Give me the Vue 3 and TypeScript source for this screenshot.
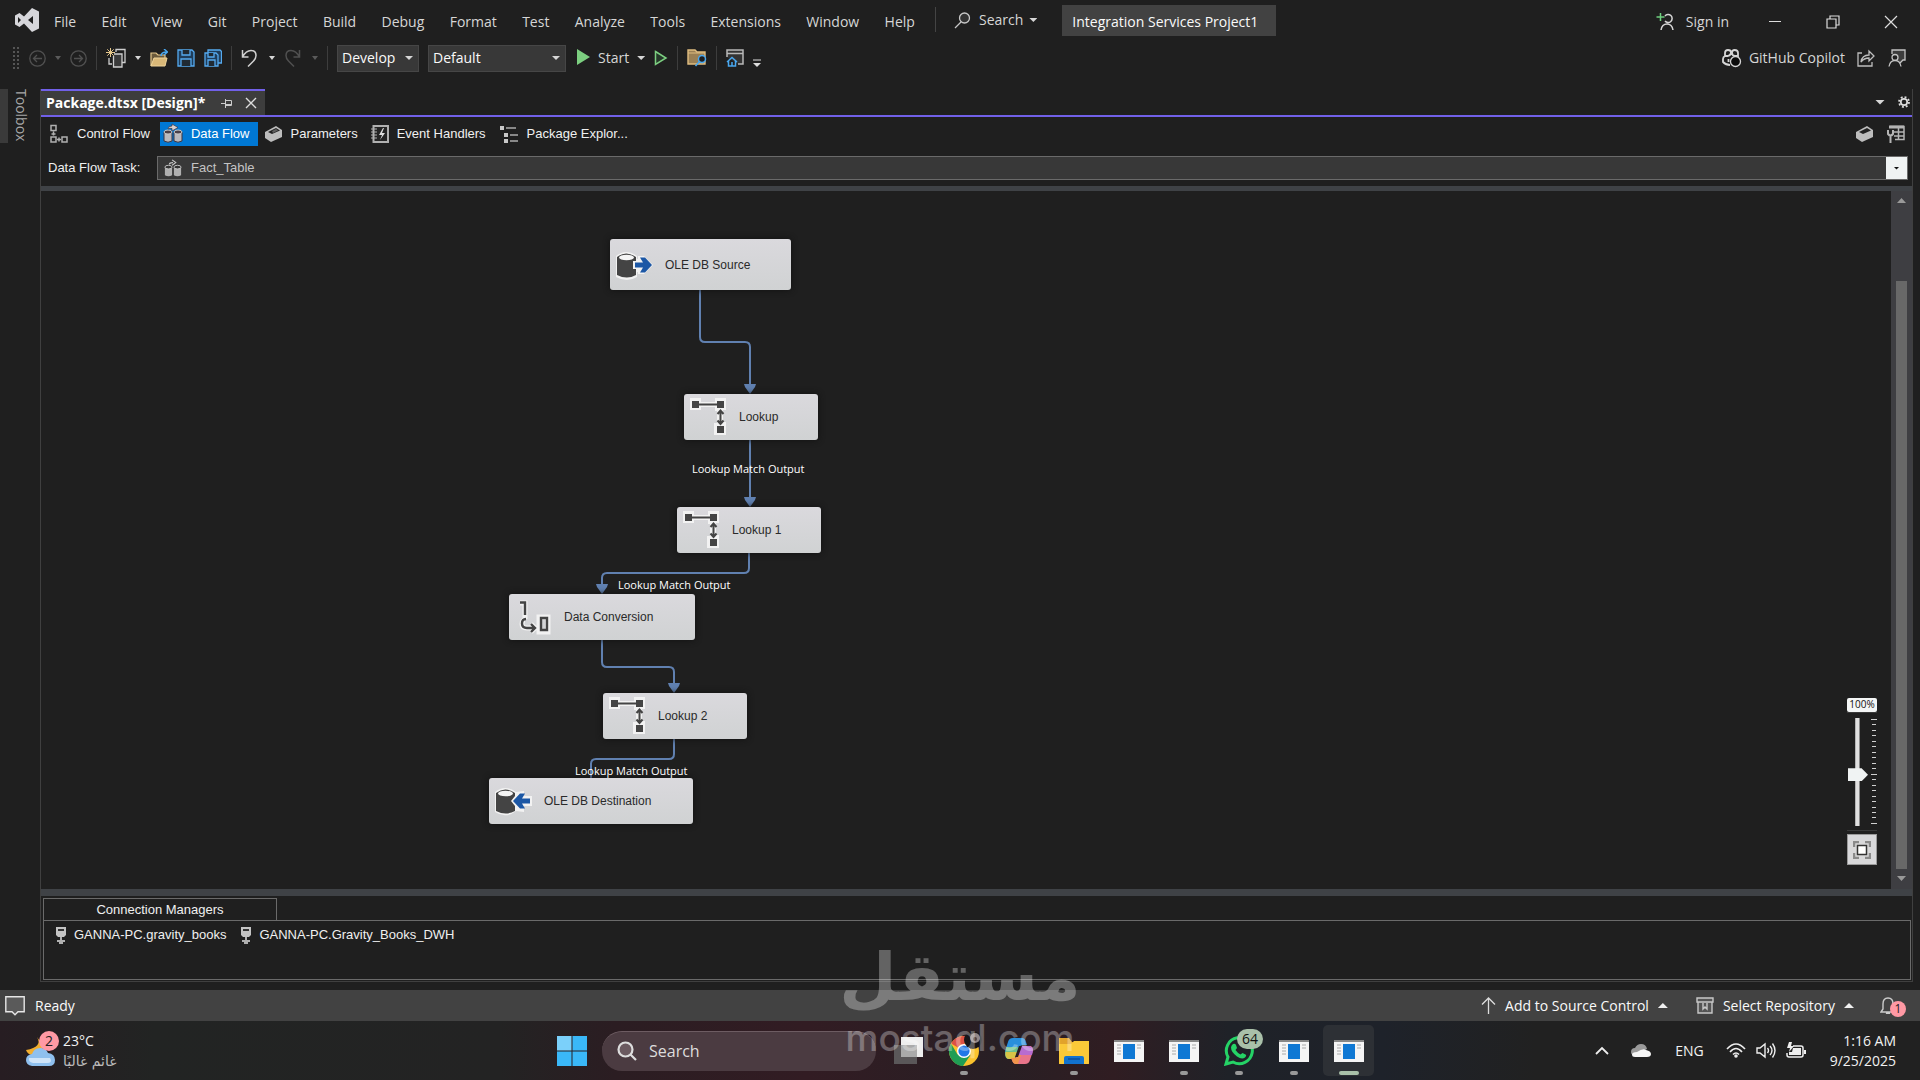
<script setup lang="ts">
import { ref } from 'vue'

interface FlowNode {
  name: string
  icon: 'source' | 'lookup' | 'convert' | 'destination'
  x: number
  y: number
  w: number
  h: number
}

const menus: string[] = ['File', 'Edit', 'View', 'Git', 'Project', 'Build', 'Debug', 'Format', 'Test', 'Analyze', 'Tools', 'Extensions', 'Window', 'Help']

const nodes: FlowNode[] = [
  { name: 'OLE DB Source', icon: 'source', x: 569, y: 48, w: 181, h: 51 },
  { name: 'Lookup', icon: 'lookup', x: 643, y: 203, w: 134, h: 46 },
  { name: 'Lookup 1', icon: 'lookup', x: 636, y: 316, w: 144, h: 46 },
  { name: 'Data Conversion', icon: 'convert', x: 468, y: 403, w: 186, h: 46 },
  { name: 'Lookup 2', icon: 'lookup', x: 562, y: 502, w: 144, h: 46 },
  { name: 'OLE DB Destination', icon: 'destination', x: 448, y: 587, w: 204, h: 46 },
]

const links: string[] = [
  'M659 99V146Q659 151 664 151H704Q709 151 709 156V194',
  'M709 249V306',
  'M708 362V377Q708 382 703 382H566Q561 382 561 387V394',
  'M561 449V471Q561 476 566 476H628Q633 476 633 481V493',
  'M633 548V563Q633 568 628 568H555Q550 568 550 573V587',
]
const arrows: string[] = ['M703 193h12l-1 3-5 7-5-7z', 'M703 306h12l-1 3-5 7-5-7z', 'M555 393h12l-1 3-5 7-5-7z', 'M627 492h12l-1 3-5 7-5-7z']

const linkLabels = [
  { x: 651, y: 269 },
  { x: 577, y: 385 },
  { x: 534, y: 571 },
]

const connections: string[] = ['GANNA-PC.gravity_books', 'GANNA-PC.Gravity_Books_DWH']
const ticks = Array.from({ length: 20 }, (_, i) => i)
const config = ref('Develop')
const platform = ref('Default')
const task = ref('Fact_Table')
const zoom = ref(47)
const query = ref('')
</script>

<template>
  <div class="app">
    <header class="titlebar">
      <svg class="vs" width="24" height="24" viewBox="0 0 24 24"><path fill="#d6d6da" fill-rule="evenodd" d="M17 0l7 3.500v17L17 24 9 15.500 4.500 19 0 16.500v-9L4.500 5 9 8.500zM3 9v6l3-3zM18 8l-5 4 5 4z" /></svg>
      <nav class="menu">
        <button v-for="m in menus" :key="m">{{ m }}</button>
      </nav>
      <span class="vsep"></span>
      <button class="search">
        <svg width="17" height="17" viewBox="0 0 17 17" fill="none" stroke="#c8c8c8" stroke-width="1.300"><circle cx="10.500" cy="6" r="5" fill="#333" /><path d="M7 10L1 16" /></svg>
        Search
        <i class="caret"></i>
      </button>
      <h1 class="solution">Integration Services Project1</h1>
      <span class="grow"></span>
      <button class="signin">
        <svg width="18" height="18" viewBox="0 0 18 18" fill="none" stroke="#d6d6d6" stroke-width="1.500"><path d="M4.500 0v8M.5 4h8" stroke="#6fcf7f" /><path d="M9 3a4 4 0 1 1 0 5M5 17q1-6 6-6t6 6" /></svg>
        Sign in
      </button>
      <div class="winbtns">
        <button aria-label="Minimize"><svg width="14" height="14" viewBox="0 0 14 14"><path d="M1 6.500h12" stroke="#ddd" /></svg></button>
        <button aria-label="Restore"><svg width="14" height="14" viewBox="0 0 14 14" fill="none" stroke="#ddd" stroke-width="1.200"><path d="M1 4h9v9H1zM4 4V1h9v9h-3" /></svg></button>
        <button aria-label="Close"><svg width="14" height="14" viewBox="0 0 14 14"><path d="M1 1l12 12M13 1L1 13" stroke="#ddd" stroke-width="1.200" /></svg></button>
      </div>
    </header>

    <div class="toolbar">
      <i class="grip"></i>
      <button aria-label="Back"><svg width="17" height="17" viewBox="0 0 17 17" fill="none" stroke="#505050" stroke-width="1.300"><circle cx="8.500" cy="8.500" r="7.700" /><path d="M13 8.500H4.500M8 5L4.500 8.500 8 12" /></svg></button>
      <i class="caret dim"></i>
      <button aria-label="Forward"><svg width="17" height="17" viewBox="0 0 17 17" fill="none" stroke="#505050" stroke-width="1.300"><circle cx="8.500" cy="8.500" r="7.700" /><path d="M4 8.500h8.500M9 5l3.500 3.500L9 12" /></svg></button>
      <span class="tsep"></span>
      <button aria-label="New project"><svg width="20" height="20" viewBox="0 0 20 20" fill="none" stroke="#cfcfcf" stroke-width="1.300"><path d="M3 10v6h3M10 4V1.500h9v13h-3" /><path d="M8 6h8v13H7.500V8" fill="#3a3a3a" /><path d="M4.500 0v9M0 4.500h9M1.300 1.300l6.400 6.400M7.700 1.300L1.300 7.700" stroke="#e6c88c" stroke-width="1" /></svg></button>
      <i class="caret"></i>
      <button aria-label="Open"><svg width="18" height="18" viewBox="0 0 18 18"><path d="M1 17V4h5l2 2h7v3" fill="#6b5a3c" stroke="#e6c88c" stroke-width="1.200" /><path d="M1 17L4 9h13l-2 8z" fill="#d9b878" stroke="#f0d49a" /><path d="M11 7q0-4 6-4M14 0l3.500 3L14 6" fill="none" stroke="#4aa8f0" stroke-width="1.500" /></svg></button>
      <button aria-label="Save"><svg width="18" height="18" viewBox="0 0 18 18" fill="#1f3d5a" stroke="#55aaf0" stroke-width="1.300"><path d="M1 1h14l2 2v14H1z" /><path d="M5 1v5h8V1M4 17v-7h10v7" fill="#202a33" /></svg></button>
      <button aria-label="Save all"><svg width="18" height="18" viewBox="0 0 18 18" fill="#1f3d5a" stroke="#55aaf0" stroke-width="1.300"><path d="M4 1h12l1.500 1.500V14H4z" /><path d="M1 4h11l2 2v11H1z" /><path d="M4 4v4h6V4M4 17v-6h7v6" fill="#202a33" /></svg></button>
      <span class="tsep"></span>
      <button class="wide" aria-label="Undo"><svg width="17" height="18" viewBox="0 0 17 18" fill="none" stroke="#d0d0d0" stroke-width="1.500"><path d="M1.500 1v7h6M1.500 8Q5 1.500 10 1.500q5 0 5 5 0 3-2.500 5.500L7 17.500" /></svg></button>
      <i class="caret"></i>
      <button class="wide" aria-label="Redo"><svg width="17" height="18" viewBox="0 0 17 18" fill="none" stroke="#505050" stroke-width="1.500"><path d="M15.500 1v7h-6M15.500 8Q12 1.500 7 1.500q-5 0-5 5 0 3 2.500 5.500l5.500 5.500" /></svg></button>
      <i class="caret dim"></i>
      <span class="tsep"></span>
      <label class="combo develop"><select v-model="config" aria-label="Solution configuration"><option>Develop</option></select><i class="caret"></i></label>
      <label class="combo default"><select v-model="platform" aria-label="Solution platform"><option>Default</option></select><i class="caret"></i></label>
      <button class="start">
        <svg width="14" height="16" viewBox="0 0 14 16"><path d="M1 0l13 8L1 16z" fill="#7ccf80" /></svg>
        Start
        <i class="caret"></i>
      </button>
      <button class="nodebug" aria-label="Start without debugging"><svg width="14" height="16" viewBox="0 0 14 16"><path d="M1.500 1.500L12 8 1.500 14.500z" fill="#26382a" stroke="#7ccf80" stroke-width="1.500" /></svg></button>
      <span class="tsep"></span>
      <button aria-label="Find in files"><svg width="20" height="18" viewBox="0 0 20 18"><path d="M1 15V1h7l2 2h8v12z" fill="#9a8055" stroke="#e0bd80" stroke-width="1.400" /><path d="M1 4h17" stroke="#e0bd80" /><circle cx="15" cy="10" r="3.500" fill="#1f1f1f" stroke="#4aa8f0" stroke-width="1.500" /><path d="M12.500 12.500L8.500 17" stroke="#4aa8f0" stroke-width="1.600" /></svg></button>
      <span class="tsep"></span>
      <button aria-label="Home window"><svg width="18" height="18" viewBox="0 0 18 18"><path d="M1 8V1h16v14h-5" fill="#333" stroke="#b8b8b8" stroke-width="1.500" /><path d="M1 4.500h16" stroke="#b8b8b8" stroke-width="1.500" /><path d="M1 13l5-4.500 5 4.500M2.500 12v5h7v-5M6 17v-4" fill="none" stroke="#4aa8f0" stroke-width="1.500" /></svg></button>
      <button class="overflow" aria-label="Toolbar options"><svg width="8" height="8" viewBox="0 0 8 8"><path d="M0 1h8" stroke="#ddd" /><path d="M0 4h8L4 8z" fill="#ddd" /></svg></button>
      <span class="grow"></span>
      <button class="copilot">
        <svg width="20" height="19" viewBox="0 0 20 19" fill="none" stroke="#d6d6d6" stroke-width="1.800"><path d="M3 7V4q0-3 3-3 3 0 3 2.500T6 7H3M10 3.500Q10 1 12.500 1 16 1 16 4v3h-3q-3 0-3-3.500M3 7q-2 1-2 3v3q3 3 7 3M6.500 10v3" /><circle cx="13.500" cy="12.500" r="5" fill="#0c0c0c" stroke-width="1.300" /></svg>
        GitHub Copilot
      </button>
      <button class="share" aria-label="Share"><svg width="18" height="18" viewBox="0 0 18 18" fill="none" stroke="#bdbdbd" stroke-width="1.300"><path d="M5 4H1v13h14v-4M4 13q1-7 8-7V2l5 5-5 5V9q-5 0-8 4z" /></svg></button>
      <button class="feedback" aria-label="Send feedback"><svg width="18" height="18" viewBox="0 0 18 18" fill="none" stroke="#c4c4c4" stroke-width="1.300"><path d="M4 5V1h13v10h-2l-3 3" fill="#3d3d3d" /><circle cx="7" cy="8.500" r="3" fill="#1f1f1f" /><path d="M1 17.500q1-6 6-6t6 6" fill="#1f1f1f" /></svg></button>
    </div>

    <main class="work">
      <aside class="rail"><button>Toolbox</button></aside>
      <section class="doc">
        <div class="doctabs">
          <div class="doctab">
            <span>Package.dtsx [Design]*</span>
            <button aria-label="Pin"><svg width="11" height="9" viewBox="0 0 11 9" fill="none" stroke="#ccc"><path d="M0 4.500h4M4.500 0v9M4.500 1.500h6v5h-6M4.500 5.500h6" /></svg></button>
            <button aria-label="Close tab"><svg width="12" height="12" viewBox="0 0 12 12"><path d="M1 1l10 10M11 1L1 11" stroke="#ddd" stroke-width="1.400" /></svg></button>
          </div>
          <span class="grow"></span>
          <i class="caret big"></i>
          <button aria-label="Options"><svg width="12" height="12" viewBox="0 0 12 12" fill="none" stroke="#ddd"><circle cx="6" cy="6" r="3.200" stroke-width="1.700" /><circle cx="6" cy="6" r="5" stroke-width="1.800" stroke-dasharray="1.900 2.027" /></svg></button>
        </div>

        <div class="views">
          <button>
            <svg width="20" height="20" viewBox="0 0 20 20" fill="none" stroke="#b0b0b0" stroke-width="1.500"><path d="M2 1.500h5v5H2zM2 13h5v5H2zM13 13h5v5h-5zM4.500 7.500v4M2.500 10h4M8 15.500h4M10 13.500v4" /></svg>
            Control Flow
          </button>
          <button class="active">
            <svg width="20" height="20" viewBox="0 0 20 20"><path d="M1 9v9q4 2.500 8 0V9zM11 9v9q4 2.500 8 0V9z" fill="#b9b9bd" stroke="#3c3540" /><ellipse cx="5" cy="9" rx="4" ry="2" fill="#4a4048" stroke="#c8c8c8" /><ellipse cx="15" cy="9" rx="4" ry="2" fill="#4a4048" stroke="#c8c8c8" /><path d="M5 6q0-3 4-3V1l6 3.500L9 8V5.500Q7 5 5 6z" fill="#d6d0d0" stroke="#3c3540" stroke-width=".7" /></svg>
            Data Flow
          </button>
          <button>
            <svg width="19" height="18" viewBox="0 0 19 18"><path d="M1 7l11-6 6 4v7L7 17l-6-4z" fill="#bdbdbd" /><path d="M4 7l8-4 4 2.500L8 9z" fill="#222" /><path d="M8 6l4-2 2 1.500L9 8z" fill="#bdbdbd" opacity=".4" /></svg>
            Parameters
          </button>
          <button>
            <svg width="18" height="18" viewBox="0 0 18 18"><path d="M2.500 1H17v16H2.500z" fill="#242424" stroke="#b0b0b0" stroke-width="2" /><path d="M0 4h6M0 7h6M0 10h6M0 13h6" stroke="#b0b0b0" /><path d="M12 3L8 10h3l-2 5 5-7h-3l2-5z" fill="#ddd" /></svg>
            Event Handlers
          </button>
          <button>
            <svg width="20" height="19" viewBox="0 0 20 19"><path d="M1 1h4v4H1zM5 8h4v4H5zM5 14h4v4H5z" fill="#c8c8c8" /><path d="M7 3h10M11 10h8M11 16h8" stroke="#888" stroke-width="2" /></svg>
            Package Explor...
          </button>
          <span class="grow"></span>
          <button class="tool" aria-label="Parameters pane"><svg width="19" height="18" viewBox="0 0 19 18"><path d="M1 7l11-6 6 4v7L7 17l-6-4z" fill="#bdbdbd" /><path d="M4 7l8-4 4 2.500L8 9z" fill="#222" /></svg></button>
          <button class="tool" aria-label="Variables"><svg width="18" height="18" viewBox="0 0 18 18" fill="none" stroke="#b4b4b4" stroke-width="1.500"><path d="M3 1.500h14v13H8" /><path d="M2 2h15" stroke-width="3" /><path d="M7 7h10M7 11h10M11.500 3v12" /><path d="M1 5v4q2.500 3 5 0V5M3.500 10v8" stroke-width="2" /></svg></button>
        </div>

        <div class="task">
          <label for="task">Data Flow Task:</label>
          <div class="taskbox">
            <svg width="20" height="18" viewBox="0 0 20 20"><path d="M1 9v9q4 2.500 8 0V9zM11 9v9q4 2.500 8 0V9z" fill="#b0b0b0" /><ellipse cx="5" cy="9" rx="4" ry="2" fill="#333" stroke="#c8c8c8" /><ellipse cx="15" cy="9" rx="4" ry="2" fill="#333" stroke="#c8c8c8" /><path d="M6 6q0-2 4-2M9 1l4 3-4 3" fill="none" stroke="#c8c8c8" stroke-width="1.300" /></svg>
            <select id="task" v-model="task"><option>Fact_Table</option></select>
            <span class="drop"><i></i></span>
          </div>
        </div>

        <div class="surface">
          <div class="canvas">
            <svg class="links" width="900" height="640" viewBox="0 0 900 640">
              <path v-for="l in links" :key="l" :d="l" fill="none" stroke="#6080b0" stroke-width="2" />
              <path v-for="a in arrows" :key="a" :d="a" fill="#6080b0" />
            </svg>
            <div v-for="n in nodes" :key="n.name" class="node" :style="{ left: n.x + 'px', top: n.y + 'px', width: n.w + 'px', height: n.h + 'px' }">
              <svg v-if="n.icon === 'lookup'" width="38" height="38" viewBox="0 0 38 38">
                <path d="M0 0h11v4h14V0h11v12h-3v12h3v13H24V25h3V13h-2V9H11v3H0z" fill="#f2f2f2" />
                <path d="M2 3h7v7H2zM27 3h7v7h-7zM27 28h7v7h-7z" fill="#444" />
                <path d="M9 6.500h18M30.500 13v12M27.500 16l3-3.500 3 3.500M27.500 22.500l3 3.500 3-3.500" fill="none" stroke="#444" stroke-width="2" />
              </svg>
              <svg v-else-if="n.icon === 'convert'" width="38" height="38" viewBox="0 0 38 38" fill="none">
                <path d="M5 5h5v16M10 22q-3 0-3 4t5 4h8M16 26l4 4-4 4M24 19h9v15h-9z" stroke="#f2f2f2" stroke-width="5" />
                <path d="M5 4.500h5V17M11 21q-4 0-4 4.500t5 4.500h8M16 26l4 4-4 4M26 20h6v12h-6z" stroke="#444" stroke-width="2.400" />
              </svg>
              <svg v-else-if="n.icon === 'source'" width="38" height="38" viewBox="0 0 38 38">
                <path d="M0 10q10-8 21 0v3h1v-3h6l9 9-9 9h-6v-2h-1v5q-10 6-21 0z" fill="#f2f2f2" />
                <path d="M1 11q9-7 19 0v4h-3v8h3v6q-9 5-19 0z" fill="#444" /><ellipse cx="10.500" cy="11.500" rx="7.500" ry="2.800" fill="#f5f5f5" />
                <path d="M19 16.500h8l-3-5h5l7 7.500-7 7.500h-5l3-5h-8z" fill="#1c57a5" />
              </svg>
              <svg v-else width="38" height="38" viewBox="0 0 38 38">
                <path d="M0 10q10-8 21 0l8-1v5h8v10h-8v6l-8-1q-10 8-21 1z" fill="#f2f2f2" />
                <path d="M1 11q9-7 19 0v3l-4 5 4 5v5q-9 5-19 0z" fill="#444" /><ellipse cx="10.500" cy="11.500" rx="7.500" ry="2.800" fill="#f5f5f5" />
                <path d="M35 16.500h-8l3-5h-5L18 19l7 7.500h5l-3-5h8z" fill="#1c57a5" />
              </svg>
              <span>{{ n.name }}</span>
            </div>
            <span v-for="(l, i) in linkLabels" :key="i" class="linklabel" :style="{ left: l.x + 'px', top: l.y + 'px' }">Lookup Match Output</span>

            <div class="zoom">
              <output for="zoom">100%</output>
              <div class="scale">
                <input id="zoom" v-model="zoom" type="range" aria-label="Zoom" />
                <div class="ticks"><i v-for="t in ticks" :key="t"></i></div>
              </div>
              <button aria-label="Zoom to fit"><svg width="18" height="18" viewBox="0 0 18 18" fill="none"><path d="M1 6V1h5M12 1h5v5M17 12v5h-5M6 17H1v-5" stroke="#8a8a8a" stroke-width="2.500" /><path d="M4.500 4.500h9v9h-9z" fill="#fff" stroke="#333" stroke-width="1.500" /></svg></button>
            </div>
          </div>
          <div class="scroll"><i class="up"></i><div class="thumb"></div><i class="down"></i></div>
        </div>

        <div class="managers">
          <h2>Connection Managers</h2>
          <div class="connlist">
            <button v-for="c in connections" :key="c">
              <svg width="10" height="17" viewBox="0 0 10 17"><path d="M0 0h10v8l-2 2H2L0 8z" fill="#c4c4c4" /><path d="M2 2h6v2H2z" fill="#333" /><path d="M4 10h2v3H4zM1 13h8v2H1zM3 15h4v2H3z" fill="#b0b0b0" /></svg>
              {{ c }}
            </button>
          </div>
        </div>
      </section>
    </main>

    <footer class="status">
      <svg width="20" height="20" viewBox="0 0 20 20"><path d="M.8.8h18.400v15H13l-3 3-3-3H.8z" fill="#5a5a5a" stroke="#e6e6e6" stroke-width="1.400" /></svg>
      <span class="ready">Ready</span>
      <span class="grow"></span>
      <button class="source">
        <svg width="15" height="17" viewBox="0 0 15 17"><path d="M7.500 17V1M1 7.500L7.500 1 14 7.500" fill="none" stroke="#ddd" stroke-width="1.300" /></svg>
        Add to Source Control
        <i class="caret upward"></i>
      </button>
      <button class="repo">
        <svg width="18" height="17" viewBox="0 0 18 17" fill="#555" stroke="#c8c8c8" stroke-width="1.400"><path d="M2 5h14v11H2zM1 1h16v4H1z" /><path d="M7 6v6l2-2 2 2V6" fill="none" /></svg>
        Select Repository
        <i class="caret upward"></i>
      </button>
      <button class="bell" aria-label="Notifications">
        <svg width="16" height="17" viewBox="0 0 16 17"><path d="M1 15l2-3V7q0-6 5-6t5 6v5l2 3zM6 16q2 1 4 0" fill="none" stroke="#ccc" stroke-width="1.400" /></svg>
        <span>1</span>
      </button>
    </footer>

    <footer class="taskbar">
      <button class="weather">
        <span class="sky">
          <svg width="32" height="32" viewBox="0 0 32 32"><path d="M12 2q6 10-11 13 2 6 9 5l9-8z" fill="#f2ae2e" /><path d="M7 31q-6-1-6-6t6-6q2-6 8-6 6 0 8 5 7 1 7 7 0 6-6 6z" fill="#8fc0ee" /><path d="M8 28q-5-1-4-5h21q3 5-3 5z" fill="#cfe4f8" /></svg>
          <b>2</b>
        </span>
        <span class="wtext"><span>23°C</span><span class="ar" dir="rtl" lang="ar">غائم غالبًا</span></span>
      </button>

      <div class="apps">
        <button class="app1" aria-label="Start"><svg width="30" height="30" viewBox="0 0 30 30"><path d="M0 0h14.500v14.500H0z" fill="#7bd0fa" /><path d="M15.500 0H30v14.500H15.500zM0 15.500h14.500V30H0zM15.500 15.500H30V30H15.500z" fill="#3ab8f8" /></svg></button>
        <label class="find">
          <svg width="20" height="20" viewBox="0 0 20 20" fill="none" stroke="#ddd" stroke-width="2.200"><circle cx="8.500" cy="8.500" r="7" fill="#6b5a60" /><path d="M13.500 13.500L19 19" /></svg>
          <input v-model="query" type="text" placeholder="Search" aria-label="Search" />
        </label>
        <button class="tile" aria-label="Task view"><svg width="30" height="30" viewBox="0 0 30 30"><path d="M0 9h23v19H0z" fill="#5a5759" /><path d="M7 1h22v20H7z" fill="#eee" /><path d="M7 9h16v12H7z" fill="#aaa" /></svg></button>
        <button class="tile run" aria-label="Chrome">
          <svg class="chrome" width="34" height="36" viewBox="0 0 34 36"><circle cx="15" cy="21" r="15" fill="#fbc22d" /><path d="M15 21L2 13.500A15 15 0 0 1 28 13.500H15z" fill="#dd5144" /><path d="M15 21l6.500 4L14 36A15 15 0 0 1 2 13.500l6.500 11z" fill="#1f9d54" /><circle cx="15" cy="21" r="7" fill="#fff" /><circle cx="15" cy="21" r="5.600" fill="#1f78e8" /><circle cx="24" cy="10" r="9" fill="#181518" /><circle cx="26" cy="8" r="5" fill="#918788" /><circle cx="26" cy="9" r="2" fill="#4d4143" /></svg>
        </button>
        <button class="tile" aria-label="Copilot">
          <svg width="28" height="26" viewBox="0 0 28 26">
            <path d="M8 0h9q3 0 4 4l1 3h-4q-3 0-4 3l-2 7H1q-2-2 0-7l2-6q1-4 5-4z" fill="#2a8fdc" />
            <path d="M1.500 9h12L11 18q-1 3-3 3H4q-4 0-4-5z" fill="#6cc08a" />
            <path d="M.5 14h11.500L11 18q-1 3-3 3H4q-4 0-3.500-7z" fill="#d8c446" />
            <path d="M20 26h-9q-3 0-4-4l-1-2h3q3 0 4-3l3-9h10q3 2 1 8l-2 6q-1 4-5 4z" fill="#e8748a" />
            <path d="M16 8h7q5 0 5 5l-1 4H13z" fill="#b76cd0" />
            <path d="M6 20h3q3 0 4-3h3l-3 9h-2q-3 0-4-4z" fill="#f0954b" />
            <path d="M14 8h3l-4 11h-3z" fill="#2b1d22" />
          </svg>
        </button>
        <button class="tile run" aria-label="File Explorer"><svg width="30" height="28" viewBox="0 0 30 28"><path d="M0 1h10l3 4h17v22H0z" fill="#e2a32a" /><path d="M0 7h12l3-3h15v22q0 1-1 1H1q-1 0-1-1z" fill="#fbc938" /><path d="M5 27v-6q0-2 2-2h16q2 0 2 2v6z" fill="#1273cf" /><path d="M9 22h12" stroke="#0b4f9c" stroke-width="1.500" /></svg></button>
        <button v-for="n in 2" :key="n" class="tile" :class="{ run: n === 2 }" aria-label="Window">
          <svg width="30" height="22" viewBox="0 0 30 22"><path d="M0 0h30v22H0z" fill="#f5f5f5" /><path d="M0 0h30v2H0z" fill="#888" /><path d="M9 4h12v15H9z" fill="#0f78d4" /><path d="M3 5h4M3 8h4M3 11h4M3 14h4M23 5h4M23 8h4" stroke="#aaa" /></svg>
        </button>
        <button class="tile run" aria-label="WhatsApp">
          <svg width="30" height="30" viewBox="0 0 30 30"><path d="M2 28l2-7a13 13 0 1 1 5 5z" fill="none" stroke="#25d366" stroke-width="3" /><path d="M9 8q2-1 3 1l1 3-1.500 2q2 3 5 4.500l2-1.500 3 1.500q1.500 1-.5 3-3 2.500-8-1-6-4.500-6-9 0-2 2-3.500z" fill="#25d366" /></svg>
          <b>64</b>
        </button>
        <button v-for="n in 2" :key="'r' + n" class="tile run" :class="{ current: n === 2 }" aria-label="Window">
          <svg width="30" height="22" viewBox="0 0 30 22"><path d="M0 0h30v22H0z" fill="#f5f5f5" /><path d="M0 0h30v2H0z" fill="#888" /><path d="M9 4h12v15H9z" fill="#0f78d4" /><path d="M3 5h4M3 8h4M3 11h4M3 14h4M23 5h4M23 8h4" stroke="#aaa" /></svg>
        </button>
      </div>

      <div class="tray">
        <button aria-label="Show hidden icons"><svg width="14" height="9" viewBox="0 0 14 9"><path d="M1 8l6-6 6 6" fill="none" stroke="#eee" stroke-width="1.800" /></svg></button>
        <svg width="20" height="14" viewBox="0 0 20 14"><path d="M4 12q-4-1-4-4 0-4 4-4 2-4 6-4 5 0 6 5l-8 4z" fill="#9a9a9a" /><path d="M4 13q-3 0-3-2.500T6 8q6-4 9-2 5 1 5 4t-4 3z" fill="#f5f5f5" /></svg>
        <span class="lang">ENG</span>
        <span class="quick">
          <svg width="20" height="15" viewBox="0 0 20 15" fill="none" stroke="#eee" stroke-width="1.600"><path d="M1 6q9-10 18 0M4 9q6-7 12 0M7 11.500q3-3 6 0" /><circle cx="10" cy="13" r="1" fill="#eee" /></svg>
          <svg width="20" height="17" viewBox="0 0 20 17" fill="none" stroke="#eee" stroke-width="1.400"><path d="M1 6h3l5-4v13l-5-4H1zM11.500 6q2 2.500 0 5M14 4q4 4.500 0 9M16.500 1.500q5 7 0 14" /></svg>
          <svg width="20" height="17" viewBox="0 0 20 17"><path d="M7 4h8q2 0 2 2v7q0 2-2 2H3q-2 0-2-2v-2" fill="none" stroke="#eee" stroke-width="1.500" /><path d="M7 6h8v7H3v-3h3zM18 8h2v4h-2zM3 0h3L5 4h3l-5 6 1-4H1z" fill="#eee" /></svg>
        </span>
        <span class="clock"><span>1:16 AM</span><span>9/25/2025</span></span>
      </div>
    </footer>

    <div class="mark"><span class="mark-ar" lang="ar">مستقل</span><span class="mark-en">mostaql.com</span></div>
  </div>
</template>

<style>
body { margin: 0; background: #1f1f1f; }
</style>

<style scoped>
* { box-sizing: border-box; }
.app { position: relative; display: flex; flex-direction: column; min-height: 100vh; background: #1f1f1f; color: #d6d6d6; font: 14px/20px "Open Sans", "Noto Sans", sans-serif; }
button { display: flex; align-items: center; flex: none; padding: 0; border: 0; background: none; color: inherit; font: inherit; white-space: nowrap; }
svg { flex: none; display: block; }
h1, h2 { margin: 0; font: inherit; }
.grow { flex: 1; }
.caret { flex: none; width: 8px; height: 4px; background: #d6d6d6; clip-path: polygon(0 0, 100% 0, 50% 100%); }
.caret.dim { background: #5a5a5a; }
.caret.big { width: 10px; height: 5px; }
.caret.upward { width: 10px; height: 5px; background: #f0f0f0; clip-path: polygon(50% 0, 100% 100%, 0 100%); }

.titlebar { display: flex; align-items: center; height: 44px; padding-left: 15px; }
.vs { margin: 0 15px 4px 0; }
.menu { display: flex; justify-content: space-between; width: 861px; }
.vsep { width: 1px; height: 25px; margin: 0 18px 6px 20px; background: #444; }
.search { gap: 8px; margin-bottom: 4px; }
.search .caret { margin-left: -2px; }
.solution { min-width: 214px; margin: 0 0 3px 25px; padding: 0 10px; height: 31px; line-height: 33px; background: #424242; color: #fafafa; font-weight: 500; }
.signin { gap: 12px; margin-right: 39px; }
.winbtns { display: flex; gap: 44px; margin-right: 22px; }

.toolbar { display: flex; align-items: center; gap: 9px; height: 28px; padding: 0 14px 0 13px; margin-bottom: 17px; }
.toolbar > .caret { width: 6px; }
.grip { width: 7px; height: 22px; background: radial-gradient(circle at 1px 1px, #555 1px, transparent 1px) 0 0 / 4px 4px; }
.tsep { width: 1px; height: 24px; background: #3d3d3d; }
.wide { width: 19px; }
.combo { position: relative; display: flex; align-items: center; height: 27px; border: 1px solid #464646; background: #383838; }
.combo select { width: 100%; height: 100%; padding: 0 0 0 4px; border: 0; background: none; appearance: none; color: #fafafa; font: inherit; }
.combo .caret { position: absolute; right: 5px; }
.develop { width: 82px; }
.default { width: 138px; }
.start { gap: 8px; margin-left: 1px; }
.start svg { margin-bottom: 2px; }
.overflow { margin-top: 10px; }
.copilot { gap: 7px; }
.share { margin: 0 4px 0 3px; }

.work { display: flex; flex: 1; padding-right: 7px; }
.rail { width: 40px; }
.rail button { writing-mode: vertical-rl; width: 28px; height: 54px; padding-left: 6px; border-left: 8px solid #3a3a3a; color: #a8a8a8; justify-content: flex-start; }
.doc { display: flex; flex-direction: column; flex: 1; min-width: 0; margin-bottom: 8px; border: 1px solid #3f3f3f; border-top: 0; font-family: "Liberation Sans", Arial, sans-serif; font-size: 13px; color: #f0f0f0; }
.doctabs { display: flex; align-items: center; height: 28px; padding-right: 2px; border-bottom: 2px solid #7160e8; }
.doctabs > button { margin-left: 13px; }
.doctab { display: flex; align-items: center; width: 224px; height: 26px; padding-left: 5px; border-top: 2px solid #7160e8; background: #3d3d3d; color: #fff; font: bold 14px/20px "Open Sans", "Noto Sans", sans-serif; }
.doctab span { flex: 1; white-space: nowrap; }
.doctab button { margin-right: 8px; }
.doctab button:first-of-type { margin-right: 13px; }
.views { display: flex; align-items: center; height: 34px; padding: 0 4px 0 5px; gap: 7px; }
.views button { gap: 8px; height: 24px; padding: 0 3px; }
.views .active { background: #0078d4; color: #fff; padding-right: 8px; margin-right: -4px; }
.views .active svg { margin-bottom: 2px; }
.task { display: flex; align-items: center; height: 35px; padding: 0 4px 1px 7px; }
.task label { width: 109px; }
.taskbox { display: flex; align-items: center; flex: 1; height: 24px; padding-left: 5px; border: 1px solid #6a6a6a; background: #383838; }
.taskbox select { flex: 1; height: 22px; padding: 0 0 0 8px; border: 0; background: none; appearance: none; color: #c4c4c4; font: inherit; }
.drop { display: flex; align-items: center; justify-content: center; width: 21px; height: 22px; background: #f0f3f3; }
.drop i { width: 6px; height: 3px; background: #111; clip-path: polygon(0 0, 100% 0, 50% 100%); }

.surface { display: flex; flex: 1; min-height: 640px; border-top: 5px solid #3f4246; border-bottom: 7px solid #3f4246; }
.canvas { position: relative; flex: 1; overflow: hidden; }
.links { position: absolute; left: 0; top: 0; }
.node { position: absolute; display: flex; align-items: center; gap: 11px; padding-left: 6px; border-radius: 3px; background: linear-gradient(#dad9dd, #d0d2d3); box-shadow: 0 0 6px #111; color: #2a2a2a; font-size: 12px; white-space: nowrap; }
.linklabel { position: absolute; color: #fff; font: 500 11px/18px "Open Sans", "Noto Sans", sans-serif; white-space: nowrap; }
.zoom { position: absolute; right: 14px; bottom: 24px; display: flex; flex-direction: column; width: 30px; }
.zoom output { height: 14px; border-radius: 2px; background: #f4f6f6; color: #111; font: 10px/13px "Open Sans", "Noto Sans", sans-serif; text-align: center; }
.scale { display: flex; justify-content: space-between; height: 119px; margin-bottom: 3px; padding: 5px 0 5px 1px; border: solid #3a3a3a; border-width: 1px 0; }
.scale input { writing-mode: vertical-lr; direction: rtl; appearance: none; width: 20px; height: 108px; margin: 0; background: linear-gradient(90deg, transparent 7px, #888 7px, #e0e0e0 8px, #e0e0e0 11px, #888 11px, #888 12px, transparent 12px); }
.scale input::-webkit-slider-thumb { appearance: none; width: 20px; height: 13px; background: #f0f3f3; clip-path: polygon(0 0, 68% 0, 100% 50%, 68% 100%, 0 100%); }
.ticks { display: flex; flex-direction: column; justify-content: space-between; align-items: center; width: 6px; padding: 1px 0; }
.ticks i { width: 4px; height: 1px; background: #d0d0d0; }
.ticks i:first-child, .ticks i:last-child, .ticks i:nth-child(11) { width: 6px; }
.zoom button { justify-content: center; height: 31px; border: 1px solid #999; background: #d8d8da; }
.scroll { display: flex; flex-direction: column; align-items: center; width: 21px; padding: 7px 0 8px; background: #3e3e42; }
.scroll i { width: 9px; height: 5px; background: #999; }
.up { clip-path: polygon(50% 0, 100% 100%, 0 100%); }
.down { clip-path: polygon(0 0, 100% 0, 50% 100%); }
.thumb { flex: 1; width: 11px; margin: 78px 0 7px; background: #686868; }

.managers { padding: 2px 1px 1px 2px; }
.managers h2 { width: 234px; height: 22px; line-height: 22px; border: 1px solid #6a6a6a; border-bottom: 0; text-align: center; }
.connlist { display: flex; align-items: flex-start; gap: 15px; height: 60px; padding: 4px 12px; border: 1px solid #6a6a6a; }
.connlist button { gap: 8px; }

.status { display: flex; align-items: center; height: 31px; padding: 0 14px 0 5px; background: #424242; color: #fafafa; }
.ready { margin-left: 10px; }
.status button { gap: 9px; }
.source { margin-right: 28px; }
.repo { margin-right: 26px; }
.bell { position: relative; width: 26px; }
.bell span { position: absolute; right: 0; top: 4px; width: 16px; height: 16px; border-radius: 8px; background: #ff99a4; color: #222; font-size: 12px; line-height: 16px; text-align: center; }

.taskbar { display: flex; align-items: center; justify-content: space-between; height: 59px; background: linear-gradient(90deg, #271d22 0, #222423 8%, #232323 26%, #2b1d22 32%, #321c23 42%, #281f24 52%, #301d22 58%, #1f2228 64%, #1e222a 72%, #212121 80%, #212121 100%); color: #f2f2f2; }
.weather { flex: 1; gap: 6px; padding-left: 25px; }
.sky { position: relative; }
.sky b { position: absolute; right: -2px; top: -4px; width: 20px; height: 20px; border-radius: 10px; background: #ff99a4; color: #222; font-weight: normal; text-align: center; }
.wtext { display: flex; flex-direction: column; align-items: flex-start; }
.ar { color: #bbb; font: 14px/20px "DejaVu Sans", sans-serif; }
.apps { display: flex; align-items: center; margin-left: 12px; }
.app1 { margin-right: 15px; }
.find { display: flex; align-items: center; gap: 12px; width: 274px; height: 40px; margin-right: 5px; padding: 0 15px; border-radius: 20px; border-top: 1px solid #6d5c62; background: #4b3b41; }
.find input { width: 180px; padding: 0; border: 0; outline: 0; background: none; color: #eee; font: 16px/24px "Open Sans", "Noto Sans", sans-serif; }
.find input::placeholder { color: #ddd; opacity: 1; }
.tile { position: relative; justify-content: center; width: 51px; height: 51px; margin: 0 2px; border-radius: 5px; }
.chrome { margin: 0 0 6px 4px; }
.run::after { content: ""; position: absolute; left: 22px; bottom: 1px; width: 8px; height: 4px; border-radius: 2px; background: #999; }
.current { background: #2d3035; }
.current::after { left: 16px; width: 20px; background: #a9c0a9; }
.tile b { position: absolute; left: 24px; top: 4px; width: 26px; height: 20px; border-radius: 10px; background: #a9c0a9; color: #111; font-weight: normal; }
.tray { display: flex; flex: 1; align-items: center; justify-content: flex-end; padding-right: 24px; }
.tray > svg { margin: 0 24px 0 22px; }
.quick { display: flex; align-items: center; gap: 10px; margin: 0 24px 0 22px; }
.clock { display: flex; flex-direction: column; align-items: flex-end; }

.mark { position: absolute; left: 50%; bottom: 24px; display: flex; flex-direction: column; align-items: center; gap: 8px; width: 240px; margin-left: -120px; color: #fff; opacity: .3; pointer-events: none; }
.mark-ar { font: bold 66px/68px "DejaVu Sans", sans-serif; }
.mark-en { font: 500 37px/36px Inter, sans-serif; }
</style>
